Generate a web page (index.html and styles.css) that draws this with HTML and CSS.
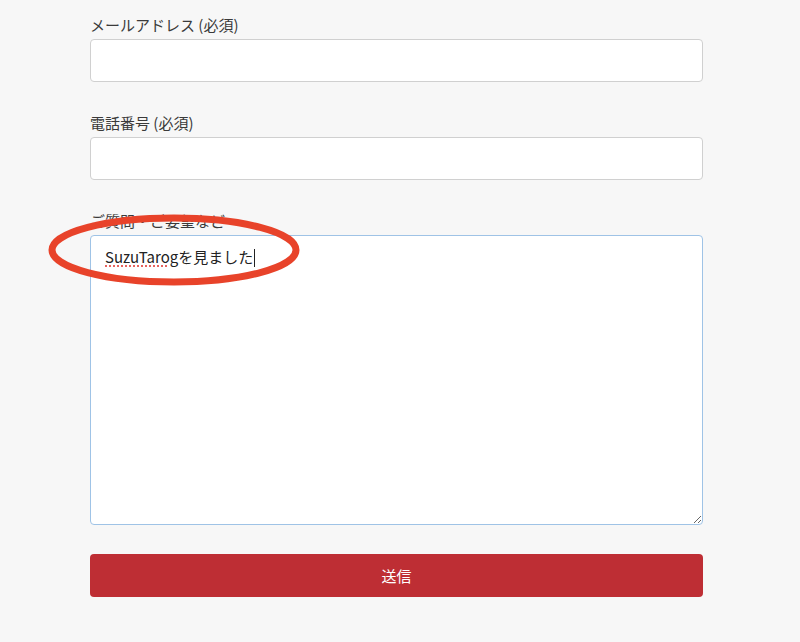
FILE: index.html
```html
<!DOCTYPE html>
<html lang="ja">
<head>
  <meta charset="UTF-8">
  <title>お問い合わせ</title>
  <link rel="stylesheet" href="styles.css">
</head>
<body>
  <form class="contact">
    <div class="field">
      <label for="email">メールアドレス (必須)</label>
      <input type="email" id="email">
    </div>

    <div class="field">
      <label for="tel">電話番号 (必須)</label>
      <input type="tel" id="tel">
    </div>

    <div class="field message-field">
      <label for="message">ご質問・ご要望など</label>
      <div class="message" id="message"><span class="typo">SuzuTarog</span>を見ました<span class="caret"></span></div>

      <!-- annotation circle drawn over the form -->
      <svg class="mark" width="260" height="80" viewBox="0 0 260 80">
        <ellipse cx="126" cy="36" rx="122" ry="32" fill="none" stroke="#e8432a" stroke-width="7"/>
      </svg>
    </div>

    <button type="button" class="submit">送信</button>
  </form>
</body>
</html>
```

FILE: styles.css
```css
body {
  margin: 0;
  background: #f7f7f7;
  font-family: "Noto Sans CJK JP", "Liberation Sans", sans-serif;
  color: #333;
}
.contact {
  width: 613px;
  margin-left: 90px;
  padding-top: 15px;
}
.field {
  margin-bottom: 31px;
}
.field label {
  display: block;
  font-size: 15px;
  line-height: 20px;
  margin-bottom: 4px;
  color: #3a3a3a;
}
.field input {
  display: block;
  box-sizing: border-box;
  width: 100%;
  height: 43px;
  border: 1px solid #d0d0d0;
  border-radius: 4px;
  background: #fff;
  outline: none;
}
.message-field {
  position: relative;
  margin-bottom: 29px;
}
.message {
  box-sizing: border-box;
  height: 290px;
  margin-top: 1px;
  padding: 10px 14px;
  border: 1px solid #9fc3e6;
  border-radius: 4px;
  background: #fff;
  font-size: 15px;
  line-height: 22px;
  color: #222;
  resize: both;
  overflow: auto;
}
.typo {
  text-decoration: underline dotted #e0302a;
  text-underline-offset: 3px;
}
.caret {
  display: inline-block;
  width: 1px;
  height: 18px;
  margin-left: 1px;
  vertical-align: -4px;
  background: #222;
}
.mark {
  position: absolute;
  left: -42px;
  top: 3px;
}
.submit {
  display: block;
  width: 100%;
  height: 43px;
  border: none;
  border-radius: 4px;
  background: #be2e34;
  color: #fff;
  font-family: inherit;
  font-size: 15px;
  cursor: pointer;
}
```
